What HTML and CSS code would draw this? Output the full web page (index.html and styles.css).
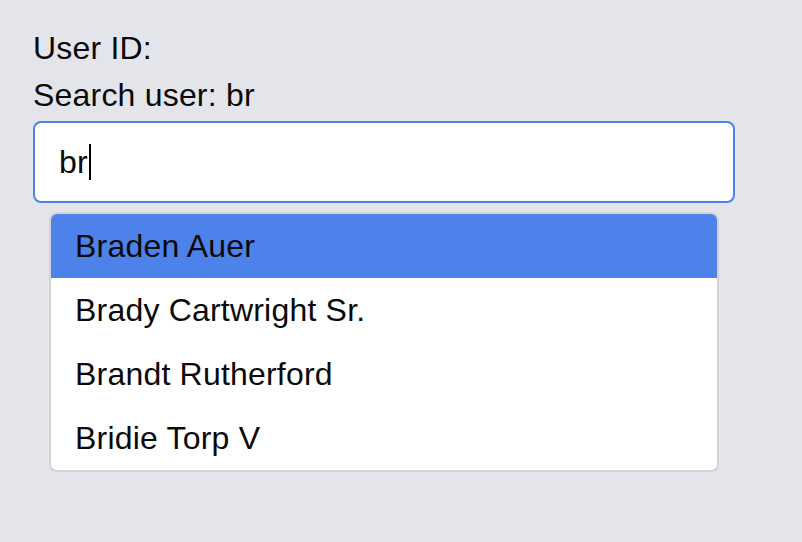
FILE: index.html
```html
<!DOCTYPE html>
<html lang="en">
<head>
  <meta charset="UTF-8" />
  <title>User search</title>
  <link rel="stylesheet" href="styles.css">
</head>
<body>
  <div class="main">
    <div class="line">User ID:</div>
    <div class="line">Search user: br</div>

    <div class="search-box">
      <span class="search-text">br</span><span class="caret"></span>
    </div>

    <ul class="suggestions">
      <li class="active">Braden Auer</li>
      <li>Brady Cartwright Sr.</li>
      <li>Brandt Rutherford</li>
      <li>Bridie Torp V</li>
    </ul>
  </div>
</body>
</html>
```

FILE: styles.css
```css
:root {
  --fondo: #e4e5ea;
  --azul: #4d82eb;
  --blanco: #ffffff;
  --gris-borde: #d2d4d9;
  --texto: #0a0a0a;
}

body {
  margin: 0;
  font-family: 'Liberation Sans', Arial, sans-serif;
  background-color: var(--fondo);
  color: var(--texto);
}

.main {
  padding: 25px 67px 0 33px;
  font-size: 32px;
  letter-spacing: 0.2px;
}

.line {
  line-height: 47px;
}

.search-box {
  margin-top: 2px;
  height: 78px;
  background: var(--blanco);
  border: 2px solid var(--azul);
  border-radius: 8px;
  padding: 0 24px;
  display: flex;
  align-items: center;
}

.caret {
  display: inline-block;
  width: 2px;
  height: 36px;
  background: #000;
  margin-left: 1px;
}

.suggestions {
  list-style: none;
  margin: 9px 16px 0;
  padding: 0;
  background: var(--blanco);
  border: 2px solid var(--gris-borde);
  border-radius: 8px;
  overflow: hidden;
}

.suggestions li {
  height: 64px;
  line-height: 64px;
  padding: 0 24px;
}

.suggestions li.active {
  background-color: var(--azul);
}
```
